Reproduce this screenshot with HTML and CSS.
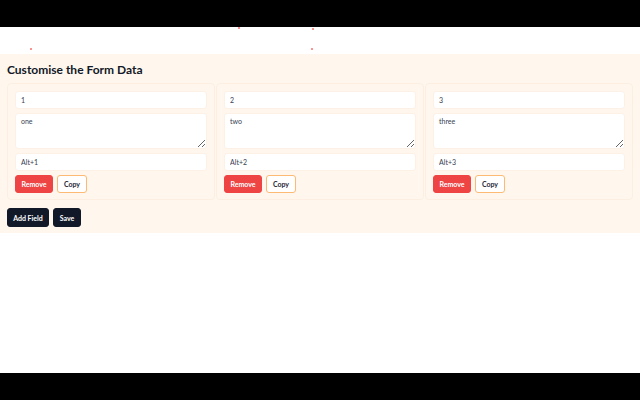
FILE: index.html
```html
<!DOCTYPE html>
<html lang="en">
<head>
<meta charset="utf-8">
<title>Customise the Form Data</title>
<link rel="stylesheet" href="styles.css">
</head>
<body>
<div class="frame">
  <div class="bar"></div>
  <div class="page">
    <div class="top-space">
      <span class="dot d1"></span>
      <span class="dot d2"></span>
      <span class="dot d3"></span>
      <span class="dot d4"></span>
    </div>
    <section class="panel">
      <h1 class="title">Customise the Form Data</h1>
      <div class="grid">
        <div class="card">
          <input class="field" type="text" value="1">
          <textarea class="area">one</textarea>
          <input class="field" type="text" value="Alt+1">
          <div class="actions">
            <button class="btn remove">Remove</button>
            <button class="btn copy">Copy</button>
          </div>
        </div>
        <div class="card">
          <input class="field" type="text" value="2">
          <textarea class="area">two</textarea>
          <input class="field" type="text" value="Alt+2">
          <div class="actions">
            <button class="btn remove">Remove</button>
            <button class="btn copy">Copy</button>
          </div>
        </div>
        <div class="card">
          <input class="field" type="text" value="3">
          <textarea class="area">three</textarea>
          <input class="field" type="text" value="Alt+3">
          <div class="actions">
            <button class="btn remove">Remove</button>
            <button class="btn copy">Copy</button>
          </div>
        </div>
      </div>
      <div class="footer">
        <button class="btn dark add">Add Field</button>
        <button class="btn dark save">Save</button>
      </div>
    </section>
  </div>
  <div class="bar"></div>
</div>
</body>
</html>
```

FILE: styles.css
```css
* { box-sizing: border-box; }
html, body { margin: 0; padding: 0; }
body {
  width: 640px;
  height: 400px;
  overflow: hidden;
  font-family: Lato, "Noto Sans", sans-serif;
  background: #ffffff;
}
.frame {
  display: flex;
  flex-direction: column;
  height: 400px;
}
.bar {
  height: 27px;
  background: #000000;
  flex: none;
}
.page {
  flex: 1;
  background: #ffffff;
}
.top-space {
  height: 27px;
  position: relative;
}
.dot {
  position: absolute;
  width: 2px;
  height: 2px;
  border-radius: 1px;
  background: #f87171;
}
.d1 { left: 238px; top: 0; }
.d2 { left: 312px; top: 1px; }
.d3 { left: 30px; top: 21px; }
.d4 { left: 311px; top: 21px; }
.panel {
  background: #fff7ed;
  padding: 8px 7px 6px;
}
.title {
  margin: 0 0 5px;
  font-size: 12px;
  line-height: 16px;
  font-weight: 700;
  color: #111827;
}
.grid {
  display: grid;
  grid-template-columns: 1fr 1fr 1fr;
  gap: 1px;
}
.card {
  border: 1px solid #fcefe2;
  border-radius: 4px;
  padding: 7px 7px 6px;
  display: flex;
  flex-direction: column;
  gap: 4px;
}
.field, .area {
  font-family: inherit;
  font-size: 7px;
  color: #374151;
  background: #ffffff;
  border: 1px solid #fdf1e6;
  border-radius: 3px;
  padding: 0 5px;
  width: 100%;
  margin: 0;
  outline: none;
}
.field {
  height: 18px;
}
.area {
  height: 36px;
  padding-top: 3px;
  resize: vertical;
  display: block;
}
.actions {
  display: flex;
  gap: 4px;
}
.btn {
  font-family: inherit;
  font-size: 7px;
  font-weight: 700;
  height: 18px;
  border-radius: 3px;
  padding: 0 4px;
  margin: 0;
  white-space: nowrap;
  cursor: pointer;
}
.remove {
  background: #ef4444;
  color: #ffffff;
  border: 1px solid #ef4444;
  width: 38px;
}
.copy {
  background: #ffffff;
  color: #1f2937;
  border: 1px solid #fdba74;
  width: 30px;
}
.footer {
  display: flex;
  gap: 4px;
  margin-top: 8px;
}
.dark {
  background: #111827;
  color: #ffffff;
  border: 1px solid #111827;
  height: 19px;
}
.add { width: 42px; }
.save { width: 28px; }
```
